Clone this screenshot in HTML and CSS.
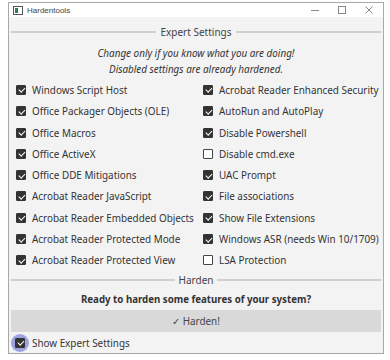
FILE: index.html
```html
<!DOCTYPE html>
<html lang="en">
  <head>
    <meta charset="UTF-8" />
    <meta name="viewport" content="width=device-width, initial-scale=1.0" />
    <title>Hardentools</title>
    <link rel="stylesheet" href="styles.css">
  </head>
  <body>
    <div class="window">
      <div class="titlebar">
        <svg class="app-icon" width="10" height="9" viewBox="0 0 10 9">
          <rect x="0.5" y="0.5" width="9" height="8" fill="#fff" stroke="#555" />
          <rect x="2" y="2" width="3" height="5" fill="#2e7d5b" />
        </svg>
        <span class="title">Hardentools</span>
        <span class="controls">
          <svg width="8" height="8" viewBox="0 0 8 8"><path d="M0 4.5h8" stroke="#888" /></svg>
          <svg width="8" height="8" viewBox="0 0 8 8"><rect x="0.5" y="0.5" width="7" height="7" fill="none" stroke="#888" /></svg>
          <svg width="8" height="8" viewBox="0 0 8 8"><path d="M0.5 0.5l7 7M7.5 0.5l-7 7" stroke="#888" /></svg>
        </span>
      </div>
      <div class="content">
        <div class="separator"><span>Expert Settings</span></div>
        <p class="hint">Change only if you know what you are doing!<br />Disabled settings are already hardened.</p>
        <div class="options">
          <label class="option"><span class="box checked"></span>Windows Script Host</label>
          <label class="option"><span class="box checked"></span>Acrobat Reader Enhanced Security</label>
          <label class="option"><span class="box checked"></span>Office Packager Objects (OLE)</label>
          <label class="option"><span class="box checked"></span>AutoRun and AutoPlay</label>
          <label class="option"><span class="box checked"></span>Office Macros</label>
          <label class="option"><span class="box checked"></span>Disable Powershell</label>
          <label class="option"><span class="box checked"></span>Office ActiveX</label>
          <label class="option"><span class="box"></span>Disable cmd.exe</label>
          <label class="option"><span class="box checked"></span>Office DDE Mitigations</label>
          <label class="option"><span class="box checked"></span>UAC Prompt</label>
          <label class="option"><span class="box checked"></span>Acrobat Reader JavaScript</label>
          <label class="option"><span class="box checked"></span>File associations</label>
          <label class="option"><span class="box checked"></span>Acrobat Reader Embedded Objects</label>
          <label class="option"><span class="box checked"></span>Show File Extensions</label>
          <label class="option"><span class="box checked"></span>Acrobat Reader Protected Mode</label>
          <label class="option"><span class="box checked"></span>Windows ASR (needs Win 10/1709)</label>
          <label class="option"><span class="box checked"></span>Acrobat Reader Protected View</label>
          <label class="option"><span class="box"></span>LSA Protection</label>
        </div>
        <div class="separator"><span>Harden</span></div>
        <p class="ready">Ready to harden some features of your system?</p>
        <button class="harden">&#x2713; Harden!</button>
        <label class="option expert"><span class="focus"><span class="box checked"></span></span>Show Expert Settings</label>
      </div>
    </div>
  </body>
</html>
```

FILE: styles.css
```css
body {
  margin: 0;
  background: #fff;
  font-family: "Noto Sans", "Open Sans", sans-serif;
  color: #333;
}
.window {
  margin: 2px 0 0 8px;
  width: 374px;
  height: 350px;
  border: 1px solid #a8a8a8;
  display: flex;
  flex-direction: column;
}
.titlebar {
  height: 20px;
  background: #fff;
  display: flex;
  align-items: center;
  padding: 0 0 0 4px;
  font-family: "Liberation Sans", sans-serif;
  font-size: 8px;
  color: #444;
}
.app-icon {
  margin-right: 4px;
}
.controls {
  margin-left: auto;
  display: flex;
  gap: 19px;
  padding-right: 10px;
}
.content {
  flex: 1;
  background: #f3f3f3;
  padding: 6px 2px 0 2px;
  display: flex;
  flex-direction: column;
}
.separator {
  display: flex;
  align-items: center;
  gap: 4px;
  font-size: 10px;
  color: #444;
  height: 18px;
}
.separator::before,
.separator::after {
  content: "";
  flex: 1;
  height: 2px;
  background: #d0d0d0;
}
.hint {
  margin: 4px 0 2px;
  text-align: center;
  font-style: italic;
  font-size: 9.9px;
  line-height: 16px;
  color: #333;
}
.options {
  display: grid;
  grid-template-columns: 187px 1fr;
  padding-left: 5px;
}
.option {
  display: flex;
  align-items: center;
  gap: 6px;
  height: 21.3px;
  font-size: 9.9px;
  white-space: nowrap;
  color: #333;
}
.box {
  width: 10px;
  height: 10px;
  flex: none;
  box-sizing: border-box;
  border: 1px solid #444;
  border-radius: 1px;
  background: #fff;
  position: relative;
}
.box.checked {
  background: #333;
  border-color: #333;
}
.box.checked::after {
  content: "";
  position: absolute;
  left: 2.5px;
  top: 0.5px;
  width: 2.5px;
  height: 5px;
  border: solid #fff;
  border-width: 0 1.5px 1.5px 0;
  transform: rotate(45deg);
}
.ready {
  margin: 1px 0 0;
  text-align: center;
  font-weight: bold;
  font-size: 9.7px;
  line-height: 20px;
  color: #333;
}
.harden {
  margin-top: 0;
  height: 22px;
  border: none;
  background: #d9d9d9;
  font-family: "Noto Sans", "Open Sans", sans-serif;
  font-size: 9.9px;
  color: #444;
}
.expert {
  height: 21px;
  gap: 3px;
  padding-left: 0;
}
.focus {
  width: 18px;
  height: 18px;
  border-radius: 50%;
  background: #9ea3e0;
  display: flex;
  align-items: center;
  justify-content: center;
}
```
